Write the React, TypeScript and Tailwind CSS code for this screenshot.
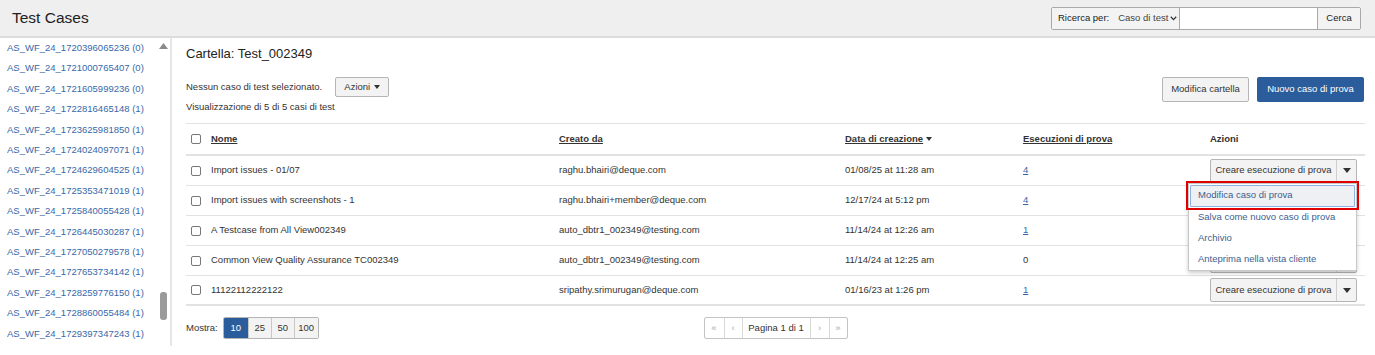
import { ReactNode } from "react";

const folders = [
  "AS_WF_24_1720396065236 (0)",
  "AS_WF_24_1721000765407 (0)",
  "AS_WF_24_1721605999236 (0)",
  "AS_WF_24_1722816465148 (1)",
  "AS_WF_24_1723625981850 (1)",
  "AS_WF_24_1724024097071 (1)",
  "AS_WF_24_1724629604525 (1)",
  "AS_WF_24_1725353471019 (1)",
  "AS_WF_24_1725840055428 (1)",
  "AS_WF_24_1726445030287 (1)",
  "AS_WF_24_1727050279578 (1)",
  "AS_WF_24_1727653734142 (1)",
  "AS_WF_24_1728259776150 (1)",
  "AS_WF_24_1728860055484 (1)",
  "AS_WF_24_1729397347243 (1)",
];

type Row = { name: string; by: string; date: string; runs: string };

const rows: Row[] = [
  { name: "Import issues - 01/07", by: "raghu.bhairi@deque.com", date: "01/08/25 at 11:28 am", runs: "4" },
  { name: "Import issues with screenshots - 1", by: "raghu.bhairi+member@deque.com", date: "12/17/24 at 5:12 pm", runs: "4" },
  { name: "A Testcase from All View002349", by: "auto_dbtr1_002349@testing.com", date: "11/14/24 at 12:26 am", runs: "1" },
  { name: "Common View Quality Assurance TC002349", by: "auto_dbtr1_002349@testing.com", date: "11/14/24 at 12:25 am", runs: "0" },
  { name: "11122112222122", by: "sripathy.srimurugan@deque.com", date: "01/16/23 at 1:26 pm", runs: "1" },
];

const cols = "grid grid-cols-[25px_348px_286px_178px_187px_1fr] items-center";

function Check() {
  return <span className="block w-[10px] h-[10px] border border-[#777] rounded-[2px] bg-white" />;
}

function Caret({ small = false }: { small?: boolean }) {
  return small ? (
    <svg width="6" height="4" viewBox="0 0 6 4">
      <path d="M0 0h6L3 4z" fill="#333" />
    </svg>
  ) : (
    <svg width="8" height="5" viewBox="0 0 8 5">
      <path d="M0 0h8L4 5z" fill="#333" />
    </svg>
  );
}

function Btn({ children, className = "" }: { children: ReactNode; className?: string }) {
  return (
    <div
      className={`flex items-center justify-center border border-[#b5b5b5] rounded-[2px] bg-[#f3f3f3] text-[#333] ${className}`}
    >
      {children}
    </div>
  );
}

// hidden = sits under the open menu, only its edge shows
function SplitButton({ hidden = false }: { hidden?: boolean }) {
  return (
    <div className="flex h-[24px] w-[147px] border border-[#b5b5b5] rounded-[2px] bg-[#f3f3f3] text-[#333]">
      <div className="flex-1 flex items-center justify-center border-r border-[#cfcfcf]">
        {!hidden && "Creare esecuzione di prova"}
      </div>
      <div className="w-[19px] flex items-center justify-center">{!hidden && <Caret />}</div>
    </div>
  );
}

function Dropdown() {
  return (
    <div className="absolute left-[-22px] top-[24px] w-[169px] h-[88px] bg-white border border-[#c8c8c8] shadow-[0_2px_4px_rgba(0,0,0,0.2)] z-10 text-[#3c5f8f]">
      <div className="h-[23px] px-[1px] pt-[1px] outline-2 outline-[#e00000] outline-offset-[1px]">
        <div className="h-[22px] flex items-center pl-[7px] bg-[#eef0f3] border border-[#8eb2e0] rounded-[1px]">
          Modifica caso di prova
        </div>
      </div>
      <div className="h-[21px] flex items-center pl-[9px]">Salva come nuovo caso di prova</div>
      <div className="h-[21px] flex items-center pl-[9px]">Archivio</div>
      <div className="h-[21px] flex items-center pl-[9px]">Anteprima nella vista cliente</div>
    </div>
  );
}

export default function App() {
  return (
    <div className="w-[1375px] h-[355px] overflow-hidden bg-white font-['Liberation_Sans',Arial,sans-serif] text-[9.5px] text-[#333]">
      {/* top bar */}
      <div className="h-[38px] bg-[#efefef] border-b-2 border-[#dddddd] flex items-center justify-between pl-[12px] pr-[14px]">
        <div className="text-[15.5px] text-[#222] leading-none">Test Cases</div>
        <div className="flex h-[23px] border border-[#a9a9a9] rounded-[2px] bg-white">
          <div className="w-[128px] flex items-center bg-[#f3f3f3] pl-[6px] border-r border-[#a9a9a9]">
            <span className="text-[#222]">Ricerca per:</span>
            <span className="ml-[9px] text-[#444]">Caso di test</span>
            <svg width="7" height="5" viewBox="0 0 7 5" className="ml-[2px]">
              <path d="M0.8 0.8L3.5 3.6L6.2 0.8" stroke="#333" strokeWidth="1.3" fill="none" />
            </svg>
          </div>
          <div className="w-[138px] bg-white border-r border-[#a9a9a9]" />
          <div className="w-[42px] flex items-center justify-center bg-[#f3f3f3] text-[#222]">Cerca</div>
        </div>
      </div>

      <div className="flex">
        {/* sidebar */}
        <div className="relative w-[172px] h-[308px] border-r-2 border-[#e6e6e6] overflow-hidden">
          <div className="pl-[7px]">
            {folders.map((f) => (
              <div key={f} className="h-[20.4px] flex items-center text-[#3868a8]">
                {f}
              </div>
            ))}
          </div>
          <svg width="9" height="6" viewBox="0 0 9 6" className="absolute left-[159px] top-[5px]">
            <path d="M0 6L4.5 0L9 6z" fill="#8a8a8a" />
          </svg>
          <div className="absolute left-[160px] top-[254px] w-[7px] h-[28px] rounded-[3px] bg-[#9a9a9a]" />
        </div>

        {/* main */}
        <div className="flex-1 pl-[14px] pr-[10px] pt-[8px]">
          <div className="text-[13px] leading-[16px] text-[#222]">Cartella: Test_002349</div>

          <div className="mt-[15px] flex justify-between">
            <div>
              <div className="flex items-center h-[20px]">
                <span>Nessun caso di test selezionato.</span>
                <Btn className="ml-[13px] h-[20px] w-[54px] gap-[4px]">
                  Azioni <Caret small />
                </Btn>
              </div>
              <div className="mt-[3px] leading-[14px]">Visualizzazione di 5 di 5 casi di test</div>
            </div>
            <div className="flex gap-[8px] pr-[1px]">
              <Btn className="h-[25px] w-[87px]">Modifica cartella</Btn>
              <div className="h-[25px] w-[107px] flex items-center justify-center rounded-[2px] bg-[#2b5c9b] text-white">
                Nuovo caso di prova
              </div>
            </div>
          </div>

          {/* table */}
          <div className="mt-[9px] border-t border-[#e2e2e2]">
            <div className={`${cols} h-[32px] border-b-2 border-[#e2e2e2] font-bold`}>
              <div className="pl-[5px]">
                <Check />
              </div>
              <div className="underline">Nome</div>
              <div className="underline">Creato da</div>
              <div className="flex items-center gap-[3px]">
                <span className="underline">Data di creazione</span>
                <Caret small />
              </div>
              <div className="underline">Esecuzioni di prova</div>
              <div>Azioni</div>
            </div>
            {rows.map((r, i) => (
              <div
                key={r.name}
                className={`${cols} h-[30px] ${i === rows.length - 1 ? "border-b-2" : "border-b"} border-[#e2e2e2]`}
              >
                <div className="pl-[5px]">
                  <Check />
                </div>
                <div>{r.name}</div>
                <div>{r.by}</div>
                <div>{r.date}</div>
                <div>{r.runs === "0" ? r.runs : <span className="underline text-[#3868a8]">{r.runs}</span>}</div>
                <div className="relative">
                  <SplitButton hidden={i > 0 && i < 4} />
                  {i === 0 && <Dropdown />}
                </div>
              </div>
            ))}
          </div>

          {/* footer */}
          <div className="mt-[11px] grid grid-cols-[1fr_auto_1fr] items-center">
            <div className="flex items-center">
              <span>Mostra:</span>
              <div className="ml-[5px] flex h-[22px] border border-[#b5b5b5] rounded-[2px] overflow-hidden">
                <div className="w-[24px] flex items-center justify-center bg-[#2b5c9b] text-white">10</div>
                <div className="w-[23px] flex items-center justify-center bg-[#f3f3f3] border-l border-[#c8c8c8]">25</div>
                <div className="w-[23px] flex items-center justify-center bg-[#f3f3f3] border-l border-[#c8c8c8]">50</div>
                <div className="w-[24px] flex items-center justify-center bg-[#f3f3f3] border-l border-[#c8c8c8]">100</div>
              </div>
            </div>
            <div className="flex h-[22px] border border-[#c4c4c4] rounded-[2px] text-[#aaa]">
              <div className="w-[19px] flex items-center justify-center">«</div>
              <div className="w-[18px] flex items-center justify-center border-l border-[#d8d8d8]">‹</div>
              <div className="w-[69px] flex items-center justify-center border-x border-[#d8d8d8] text-[#333]">
                Pagina 1 di 1
              </div>
              <div className="w-[18px] flex items-center justify-center">›</div>
              <div className="w-[18px] flex items-center justify-center border-l border-[#d8d8d8]">»</div>
            </div>
            <div />
          </div>
        </div>
      </div>
    </div>
  );
}
